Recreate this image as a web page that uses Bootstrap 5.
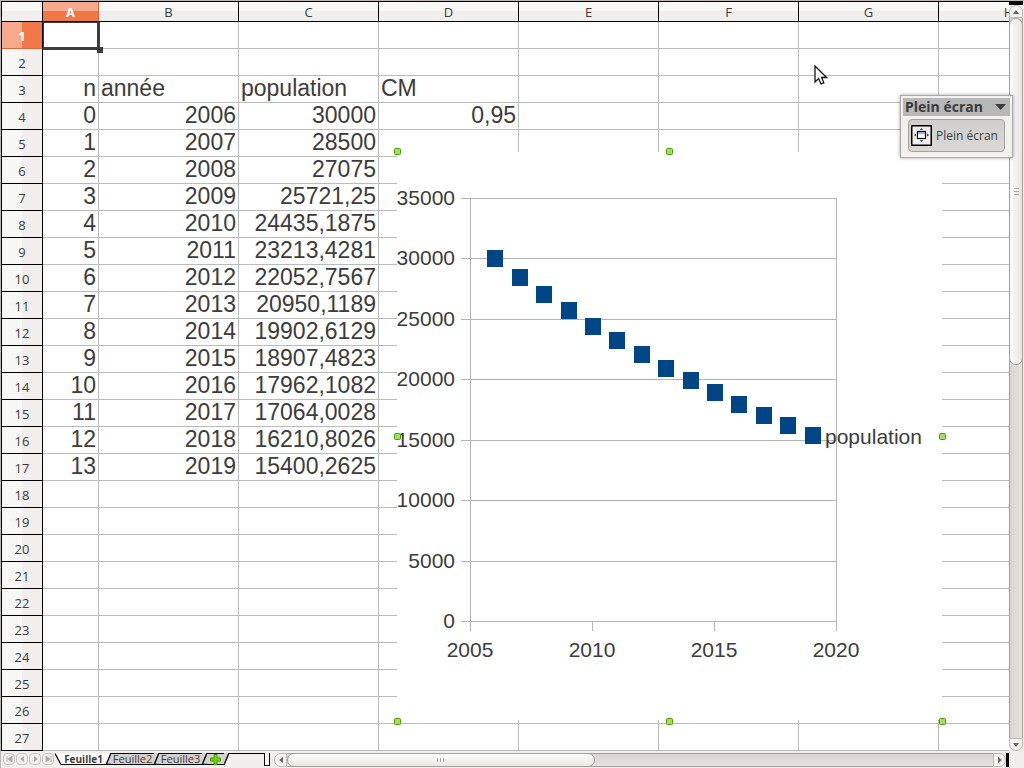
<!DOCTYPE html>
<html lang="fr">
<head>
<meta charset="utf-8">
<meta name="viewport" content="width=device-width, initial-scale=1">
<title>Feuille de calcul – Plein écran</title>
<link href="https://cdn.jsdelivr.net/npm/bootstrap@5.3.0/dist/css/bootstrap.min.css" rel="stylesheet">
<style>
  :root { --ink: #3c3c3c; --grid: #bbb; --chrome: #f0efed; --edge: #a39f9b; }
  body { font-family: "Open Sans", "Noto Sans", sans-serif; color: var(--ink); background: var(--chrome); }
  button { color: inherit; font: inherit; padding: 0; border: 0; background: none; }
  .window { border-top: 1px solid #bab9b6; border-left: 1px solid #bab9b6; }

  /* cells */
  .sheet { background: #fff; border-top: 1px solid #000; border-left: 1px solid #000; }
  .cells { table-layout: fixed; width: 1077px; border-collapse: separate; border-spacing: 0; }
  .cells th { font-size: 13px; line-height: 18px; font-weight: 400; text-align: center; padding: 0; border: solid #000; border-width: 0 1px 1px 0; }
  .cells thead th { height: 20px; background: linear-gradient(#f7f7f5 50%, #f0efed 50%); }
  .cells tbody th { height: 27px; padding-top: 2px; line-height: 24px; background: linear-gradient(90deg, #f7f7f5 50%, #f0efed 50%); }
  .cells td { height: 27px; padding: 0 2px 2px; border: solid var(--grid); border-width: 0 1px 1px 0; font: 23px/24px "Liberation Sans", Arial, sans-serif; text-align: right; white-space: nowrap; }
  .cells td.label-cell { text-align: left; }
  .cells thead th.current { color: #fff; font-weight: 700; background: linear-gradient(#f6a98b 50%, #f07746 50%); border-right-color: #d9673c; }
  .cells tbody th.current { color: #fff; font-weight: 700; background: linear-gradient(90deg, #f6a98b 50%, #f07746 50%); border-bottom-color: #d9673c; }
  .col-num { width: 41px; } .col-a { width: 56px; } .col-std { width: 140px; }
  .cell-cursor { position: absolute; left: 41px; top: 20px; width: 57px; height: 28px; border: solid var(--ink); border-width: 1px 3px 3px 1px; }
  .cell-cursor::after { content: ""; position: absolute; right: -6px; bottom: -6px; width: 6px; height: 6px; background: var(--ink); }

  /* chart floating over the cells */
  .chart { position: absolute; left: 395px; top: 150px; overflow: visible; }
  .chart text { font: 21px "Liberation Sans", Arial, sans-serif; fill: var(--ink); }
  .chart .rule { stroke: #b3b3b3; fill: none; }
  .chart .marker { fill: #004586; }
  .chart .grip { fill: #9ee061; stroke: #4e9a06; }

  /* floating toolbar */
  .palette { position: absolute; right: 11px; top: 94px; width: 113px; height: 63px; padding: 2px; background: #f2f1ef; border: 1px solid #aaa; box-shadow: 0 0 3px rgba(0,0,0,.4); z-index: 3; }
  .palette-title { height: 18px; padding: 0 4px 0 2px; background: #b7b7b7; font-size: 14px; line-height: 18px; font-weight: 700; white-space: nowrap; }
  .palette-btn { width: 97px; height: 33px; margin: 3px 4px 0 5px; padding: 0 2px; background: linear-gradient(#cfcfce, #d9d8d7); border: 1px solid #a2a2a2; border-radius: 4px; font-size: 12px; line-height: 16px; white-space: nowrap; }
  .pointer { position: absolute; left: 812px; top: 63px; }

  /* scroll bars */
  .vbar { width: 14px; border-top: 4px solid #000; }
  .vbar .track { border: solid var(--edge); border-width: 0 1px; background: linear-gradient(90deg, #d8d5d2, #e5e3e1); }
  .vbar .arrow { height: 13px; border: 1px solid #bab7b4; background: #f5f4f2; flex: none; }
  .vbar .arrow.up { border-radius: 7px 7px 0 0; } .vbar .arrow.down { border-radius: 0 0 7px 7px; }
  .vbar .thumb { flex: 348 0 0; margin: 0 -1px; border: 1px solid var(--edge); border-radius: 7px; background: linear-gradient(90deg, #fcfcfb, #e6e4e1); }
  .vbar .rest { flex: 376 0 0; }
  .gutter { width: 1px; }
  .hbar { height: 14px; border-right: 3px solid #000; }
  .hbar .track { border: solid var(--edge); border-width: 1px 0; background: linear-gradient(#d8d5d2, #e5e3e1); }
  .hbar .arrow { width: 13px; border: 1px solid #bab7b4; background: #f5f4f2; flex: none; }
  .hbar .arrow.prev { border-radius: 7px 0 0 7px; } .hbar .arrow.next { border-radius: 0 7px 7px 0; }
  .hbar .thumb { flex: 309 0 0; margin: -1px 0; border: 1px solid var(--edge); border-radius: 7px; background: linear-gradient(#fdfdfc, #e9e7e4); }
  .hbar .rest { flex: 401 0 0; }

  /* sheet tabs */
  .footer-bar { height: 17px; padding-top: 2px; padding-right: 15px; }
  .tabs { width: 269px; height: 14px; padding-left: 2px; font-size: 11px; line-height: 12px; }
  .nav-step { width: 12px; height: 12px; margin-right: 1px; border: 1px solid #c6c4c1; border-radius: 4px; }
  .sheet-tab { height: 12px; background: #d3d1ce; border-bottom: 1px solid #000; border-top: 1px solid #000; line-height: 10px; white-space: nowrap; }
  .sheet-tab.open { background: #fff; border-top-color: #fff; font-size: 10px; font-weight: 700; }
  .slant { flex: none; }
  .tab-rest { height: 13px; border-top: 1px solid #000; border-right: 1px solid #000; }
  .splitter { width: 5px; height: 13px; border: solid #000; border-width: 0 1px 1px 0; background: #f7f7f5; }
</style>
</head>
<body class="vh-100 overflow-hidden">
<div class="window d-flex flex-column h-100">
  <main class="d-flex flex-grow-1 overflow-hidden position-relative">
    <div class="sheet flex-grow-1 overflow-hidden position-relative">
      <table class="cells">
        <colgroup><col class="col-num"><col class="col-a"><col class="col-std" span="7"></colgroup>
        <thead><tr><th></th><th class="current" scope="col">A</th><th scope="col">B</th><th scope="col">C</th><th scope="col">D</th><th scope="col">E</th><th scope="col">F</th><th scope="col">G</th><th scope="col">H</th></tr></thead>
        <tbody id="rows"></tbody>
      </table>
      <div class="cell-cursor"></div>

      <svg class="chart" width="545" height="568" viewBox="397 152 545 568" role="img" aria-label="population">
        <rect x="397" y="152" width="545" height="568" fill="#fff"/>
        <g id="axes" shape-rendering="crispEdges"></g>
        <g id="scaleLabels"></g>
        <g id="markers" shape-rendering="crispEdges"></g>
        <text x="825" y="444">population</text>
        <g id="grips"></g>
      </svg>

      <svg class="pointer" width="14" height="22" viewBox="0 0 14 22"><path d="M1 1V17L4.600 13.600L7 19L9.800 17.800L7.600 12.500H12.500Z" fill="#fff" stroke="#111" stroke-width="1.300"/></svg>
    </div>

    <div class="vbar d-flex flex-column flex-shrink-0">
      <button class="arrow up d-flex align-items-center justify-content-center" aria-label="Monter"><svg width="6" height="4"><path d="M0 4L3 0L6 4Z" fill="#666"/></svg></button>
      <div class="track d-flex flex-column flex-grow-1">
        <div class="thumb d-flex align-items-center justify-content-center"><svg width="5" height="8"><path d="M0 .5H5M0 3.500H5M0 6.500H5" stroke="#aaa"/></svg></div>
        <div class="rest"></div>
      </div>
      <button class="arrow down d-flex align-items-center justify-content-center" aria-label="Descendre"><svg width="6" height="4"><path d="M0 0L3 4L6 0Z" fill="#666"/></svg></button>
    </div>
    <div class="gutter flex-shrink-0"></div>

    <section class="palette" aria-label="Plein écran">
      <div class="palette-title d-flex align-items-center justify-content-between">Plein écran
        <svg width="11" height="6"><path d="M0 0H11L5.500 6Z" fill="#3c3c3c"/></svg></div>
      <button class="palette-btn d-flex align-items-center gap-1">
        <svg width="21" height="21" viewBox="0 0 21 21"><rect x=".75" y=".75" width="19.500" height="19.500" fill="#eee" stroke="#000" stroke-width="1.500"/><rect x="6.500" y="6.500" width="8" height="7" fill="#fff" stroke="#000" stroke-width="1.200"/><path d="M7 8H14" stroke="#7896c8" stroke-width="1.500"/><path d="M10.500 3L12 5H9ZM10.500 17L12 15H9ZM3 10L5 8.500V11.500ZM18 10L16 8.500V11.500Z" fill="#333"/></svg>
        <span>Plein écran</span>
      </button>
    </section>
  </main>

  <footer class="footer-bar d-flex flex-shrink-0">
    <div class="tabs d-flex flex-shrink-0 align-items-start">
      <button class="nav-step d-flex align-items-center justify-content-center" aria-label="Première feuille"><svg width="7" height="6"><path d="M1 0V6M6 0L2 3L6 6Z" stroke="#aaa" fill="#aaa" stroke-width=".8"/></svg></button>
      <button class="nav-step d-flex align-items-center justify-content-center" aria-label="Feuille précédente"><svg width="5" height="6"><path d="M4 0L0 3L4 6Z" fill="#aaa"/></svg></button>
      <button class="nav-step d-flex align-items-center justify-content-center" aria-label="Feuille suivante"><svg width="5" height="6"><path d="M1 0L5 3L1 6Z" fill="#aaa"/></svg></button>
      <button class="nav-step d-flex align-items-center justify-content-center" aria-label="Dernière feuille"><svg width="7" height="6"><path d="M6 0V6M1 0L5 3L1 6Z" stroke="#aaa" fill="#aaa" stroke-width=".8"/></svg></button>
      <svg class="slant" width="6" height="12"><path d="M0 0H6V12Z" fill="#fff"/><path d="M0 .5L6 11.500" stroke="#000" stroke-width="1.300"/></svg>
      <button class="sheet-tab open" style="width:45px">Feuille1</button>
      <svg class="slant" width="5" height="12"><path d="M0 0H5L0 12Z" fill="#fff"/><path d="M5 0V12H0Z" fill="#d3d1ce"/><path d="M0 12L5 0M1 11.500H5" stroke="#000" stroke-width="1.300"/></svg>
      <button class="sheet-tab" style="width:43px">Feuille2</button>
      <svg class="slant" width="5" height="12"><rect width="5" height="12" fill="#d3d1ce"/><path d="M0 12L5 0M0 11.500H5" stroke="#000" stroke-width="1.300"/></svg>
      <button class="sheet-tab" style="width:43px">Feuille3</button>
      <svg class="slant" width="5" height="12"><rect width="5" height="12" fill="#d3d1ce"/><path d="M0 12L5 0M0 11.500H5" stroke="#000" stroke-width="1.300"/></svg>
      <button class="sheet-tab d-flex align-items-center justify-content-center" style="width:17px" aria-label="Ajouter une feuille"><svg width="11" height="11" viewBox="0 0 11 11"><path d="M4 .5H7V4H10.500V7H7V10.500H4V7H.5V4H4Z" fill="#73d216" stroke="#4e9a06"/></svg></button>
      <svg class="slant" width="5" height="12"><path d="M0 0H5L0 12Z" fill="#d3d1ce"/><path d="M0 12L5 0" stroke="#000" stroke-width="1.300"/></svg>
      <div class="tab-rest flex-grow-1"></div>
      <div class="splitter"></div>
    </div>
    <div class="hbar d-flex flex-grow-1 ms-1">
      <button class="arrow prev d-flex align-items-center justify-content-center" aria-label="Gauche"><svg width="4" height="6"><path d="M4 0L0 3L4 6Z" fill="#666"/></svg></button>
      <div class="track d-flex flex-grow-1">
        <div class="thumb d-flex align-items-center justify-content-center"><svg width="8" height="4"><path d="M.5 0V4M3.500 0V4M6.500 0V4" stroke="#aaa"/></svg></div>
        <div class="rest"></div>
      </div>
      <button class="arrow next d-flex align-items-center justify-content-center" aria-label="Droite"><svg width="4" height="6"><path d="M0 0L4 3L0 6Z" fill="#666"/></svg></button>
    </div>
  </footer>
</div>

<script src="https://cdn.jsdelivr.net/npm/bootstrap@5.3.0/dist/js/bootstrap.bundle.min.js"></script>
<script>
  const population = ['30000', '28500', '27075', '25721,25', '24435,1875', '23213,4281', '22052,7567',
    '20950,1189', '19902,6129', '18907,4823', '17962,1082', '17064,0028', '16210,8026', '15400,2625'];

  // rows 1 to 27, with the series starting on row 4
  let rows = '';
  for (let r = 1; r <= 27; r++) {
    let cells = Array(8).fill('');
    if (r === 3) cells = ['n', 'année', 'population', 'CM', '', '', '', ''];
    const n = r - 4;
    if (n >= 0 && n < population.length) cells.splice(0, 3, n, 2006 + n, population[n]);
    if (r === 4) cells[3] = '0,95';
    rows += `<tr><th scope="row"${r === 1 ? ' class="current"' : ''}>${r}</th>` +
      cells.map((c, i) => `<td${r === 3 && i ? ' class="label-cell"' : ''}>${c}</td>`).join('') + '</tr>';
  }
  document.getElementById('rows').innerHTML = rows;

  // chart scales
  const px = year => Math.round(470 + (year - 2005) * 24.4);
  const py = value => Math.round(621 - value * 423 / 35000);
  let axes = '', labels = '';
  for (let v = 0; v <= 35000; v += 5000) {
    axes += `<path class="rule" d="M461 ${py(v) + .5}H837"/>`;
    labels += `<text x="455" y="${py(v) + 7}" text-anchor="end">${v}</text>`;
  }
  for (let y = 2005; y <= 2020; y += 5) {
    axes += `<path class="rule" d="M${px(y) + .5} ${y === 2005 || y === 2020 ? 198 : 621}V631"/>`;
    labels += `<text x="${px(y)}" y="657" text-anchor="middle">${y}</text>`;
  }
  document.getElementById('axes').innerHTML = axes;
  document.getElementById('scaleLabels').innerHTML = labels;
  document.getElementById('markers').innerHTML = population.map((p, i) =>
    `<rect class="marker" x="${Math.floor(470.4 + (i + 1) * 24.4) - 7}" y="${py(parseFloat(p.replace(',', '.'))) - 8}" width="16" height="17"/>`).join('');
  document.getElementById('grips').innerHTML =
    [[397, 151], [669, 151], [942, 151], [397, 436], [942, 436], [397, 721], [669, 721], [942, 721]]
      .map(([x, y]) => `<rect class="grip" x="${x - 2.5}" y="${y - 2.5}" width="6" height="6" rx="1"/>`).join('');
</script>
</body>
</html>
